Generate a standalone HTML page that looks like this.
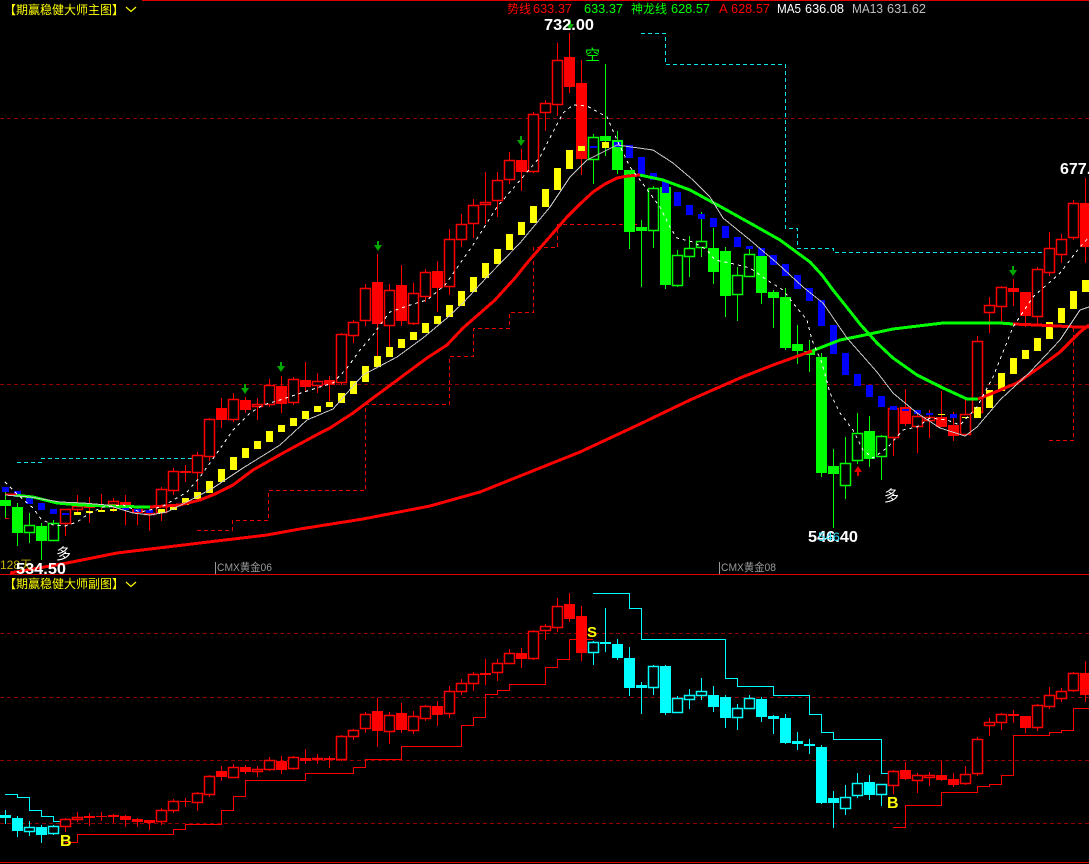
<!DOCTYPE html>
<html><head><meta charset="utf-8"><title>K线图</title>
<style>
html,body{margin:0;padding:0;background:#000;width:1089px;height:864px;overflow:hidden}
svg{display:block;position:absolute;left:0;top:0}
text{font-family:"Liberation Sans","Noto Sans CJK SC",sans-serif}
.g path,.g line,.l polyline{shape-rendering:crispEdges}
.g path.h{shape-rendering:auto;stroke-width:1.5}
</style></head><body>
<svg width="1089" height="864" viewBox="0 0 1089 864" xmlns="http://www.w3.org/2000/svg">
<rect width="1089" height="864" fill="#000"/>
<g class="g" fill="none" stroke-width="1">
<!-- frame -->
<path d="M142 .5H1089M0 574.5H1089M0 862.5H1089" stroke="#e00000"/>
<path d="M0 118.5H1089M0 384.5H1089M0 633.5H1089M0 697.5H1089M0 760.5H1089M0 823.5H1089" stroke="#900000" stroke-dasharray="4 3"/>
<path d="M215.5 562V574M719.5 562V574" stroke="#999"/>
<!-- stepped dashed main -->
<path d="M197 530.5H232.5V520.5H268.5V490.5H365.5V404.5H449.5V356.5H473.5V328.5H509.5V312.5H533.5V247.5H557.5V224.5H637M1049 440.5H1073.5V327M5 518.5H14" stroke="#f00000" stroke-dasharray="4 3"/>
<path d="M17 462.5H41.5V458.5H193M641 33.5H665.5V64.5H785.5V228.5H797.5V248.5H833.5V252.5H1045" stroke="#00e8e8" stroke-dasharray="4 3"/>
<!-- main wicks -->
<path stroke="#f00" d="M65.5 509V536M77.5 495V512M89.5 497V523M101.5 494V512M113.5 498V512M125.5 495V525M137.5 507V525M149.5 513V531M161.5 487V521M173.5 468V495M185.5 465V482M197.5 452V491M209.5 418V461M221.5 398V428M233.5 393V422M245.5 397V413M257.5 398V420M269.5 379V407M281.5 376V413M293.5 377V405M305.5 362V392M317.5 373V393M329.5 376V401M341.5 333V385M353.5 320V343M365.5 284V326M377.5 254V365M389.5 284V347M401.5 265V326M413.5 283V325M425.5 269V302M437.5 261V312M449.5 229V295M461.5 214V247M473.5 199V238M485.5 172V224M497.5 172V217M509.5 152V184M521.5 149V191M533.5 112V173M545.5 100V131M557.5 43V116M569.5 33V93M581.5 60V175M893.5 408V456M905.5 389V426M917.5 412V453M929.5 410V438M941.5 391V427M953.5 412V441M965.5 399V435M977.5 336V414M989.5 297V333M1001.5 286V321M1013.5 279V306M1025.5 292V327M1037.5 267V325M1049.5 232V276M1061.5 234V263M1073.5 200V240M1085.5 178V263"/>
<path stroke="#0f0" d="M5.5 492V518M17.5 503V546M29.5 513V543M41.5 523V560M53.5 520V541M593.5 134V184M605.5 64V156M617.5 131V174M629.5 170V249M641.5 220V287M653.5 186V248M665.5 180V289M677.5 250V287M689.5 236V277M701.5 212V257M713.5 228V284M725.5 247V317M737.5 267V321M749.5 249V277M761.5 248V304M773.5 290V328M785.5 288V350M797.5 325V364M809.5 340V372M821.5 353V477M833.5 449V528M845.5 437V499M857.5 413V464M869.5 416V467M881.5 435V480"/>
<!-- main hollow red -->
<path class="h" stroke="#f00" fill="#000" d="M60.5 509.5h10V523.5h-10zM72.5 506.5h10V509.5h-10zM108.5 501.5h10V504.5h-10zM144.5 513.5h10V514.5h-10zM156.5 489.5h10V512.5h-10zM168.5 471.5h10V490.5h-10zM192.5 455.5h10V472.5h-10zM204.5 419.5h10V456.5h-10zM228.5 399.5h10V419.5h-10zM252.5 404.5h10V406.5h-10zM264.5 385.5h10V404.5h-10zM288.5 379.5h10V402.5h-10zM312.5 381.5h10V385.5h-10zM336.5 334.5h10V382.5h-10zM348.5 322.5h10V335.5h-10zM360.5 288.5h10V320.5h-10zM384.5 290.5h10V325.5h-10zM408.5 293.5h10V323.5h-10zM420.5 272.5h10V296.5h-10zM444.5 239.5h10V286.5h-10zM456.5 224.5h10V239.5h-10zM468.5 205.5h10V223.5h-10zM480.5 202.5h10V204.5h-10zM492.5 180.5h10V200.5h-10zM504.5 160.5h10V179.5h-10zM528.5 114.5h10V171.5h-10zM540.5 103.5h10V112.5h-10zM552.5 60.5h10V104.5h-10zM888.5 408.5h10V437.5h-10zM912.5 416.5h10V426.5h-10zM924.5 417.5h10V420.5h-10zM960.5 414.5h10V434.5h-10zM972.5 341.5h10V412.5h-10zM984.5 305.5h10V312.5h-10zM996.5 287.5h10V306.5h-10zM1032.5 269.5h10V316.5h-10zM1044.5 248.5h10V272.5h-10zM1056.5 239.5h10V254.5h-10zM1068.5 203.5h10V237.5h-10z"/>
<!-- main hollow green -->
<path class="h" stroke="#0f0" fill="#000" d="M24.5 525.5h10V532.5h-10zM48.5 523.5h10V540.5h-10zM588.5 137.5h10V159.5h-10zM648.5 188.5h10V230.5h-10zM672.5 255.5h10V285.5h-10zM684.5 248.5h10V256.5h-10zM696.5 241.5h10V247.5h-10zM732.5 275.5h10V294.5h-10zM744.5 254.5h10V276.5h-10zM840.5 463.5h10V485.5h-10zM852.5 433.5h10V460.5h-10zM876.5 436.5h10V456.5h-10z"/>
<!-- main filled red -->
<path fill="#f00" d="M216 408h11V420h-11zM240 400h11V410h-11zM276 386h11V404h-11zM300 380h11V387h-11zM324 380h11V385h-11zM372 282h11V324h-11zM396 285h11V321h-11zM432 271h11V288h-11zM516 160h11V172h-11zM564 57h11V87h-11zM576 83h11V159h-11zM84 505h11V508h-11zM96 505h11V507h-11zM120 502h11V505h-11zM132 509h11V513h-11zM180 471h11V473h-11zM900 407h11V424h-11zM936 417h11V427h-11zM948 425h11V436h-11zM1008 288h11V292h-11zM1020 292h11V316h-11zM1080 203h11V247h-11z"/>
<!-- main filled green -->
<path fill="#0f0" d="M0 500h11V506h-11zM12 507h11V533h-11zM36 526h11V541h-11zM600 136h11V141h-11zM612 140h11V170h-11zM624 170h11V232h-11zM636 227h11V231h-11zM660 187h11V285h-11zM708 248h11V272h-11zM720 251h11V296h-11zM756 256h11V293h-11zM768 292h11V298h-11zM780 297h11V348h-11zM792 344h11V351h-11zM804 351h11V355h-11zM816 357h11V473h-11zM828 466h11V474h-11zM864 431h11V459h-11z"/>
<!-- blue -->
<path fill="#00f" d="M2 487h7V492h-7zM14 491h7V497h-7zM26 497h7V504h-7zM38 503h7V510h-7zM50 509h7V514h-7zM62 513h7V515h-7zM122 508h7V510h-7zM134 509h7V512h-7zM146 510h7V513h-7zM590 146h7V148h-7zM614 142h7V147h-7zM626 145h7V158h-7zM638 157h7V174h-7zM650 173h7V180h-7zM662 180h7V193h-7zM674 192h7V206h-7zM686 205h7V215h-7zM698 214h7V219h-7zM710 218h7V227h-7zM722 226h7V238h-7zM734 237h7V247h-7zM746 246h7V249h-7zM758 248h7V256h-7zM770 255h7V265h-7zM782 264h7V276h-7zM794 275h7V289h-7zM806 288h7V301h-7zM818 300h7V326h-7zM830 325h7V354h-7zM842 353h7V375h-7zM854 374h7V386h-7zM866 385h7V397h-7zM878 396h7V407h-7zM890 406h7V410h-7zM902 409h7V411h-7zM914 410h7V414h-7zM926 413h7V415h-7zM950 414h7V418h-7z"/>
<!-- yellow -->
<path fill="#ff0" d="M74 512h7V515h-7zM86 511h7V513h-7zM98 510h7V512h-7zM110 509h7V511h-7zM158 509h7V513h-7zM170 504h7V510h-7zM182 498h7V505h-7zM194 492h7V499h-7zM206 481h7V493h-7zM218 469h7V482h-7zM230 457h7V470h-7zM242 448h7V458h-7zM254 441h7V449h-7zM266 431h7V442h-7zM278 425h7V432h-7zM290 418h7V426h-7zM302 411h7V419h-7zM314 406h7V412h-7zM326 402h7V407h-7zM338 393h7V403h-7zM350 381h7V394h-7zM362 366h7V382h-7zM374 356h7V367h-7zM386 347h7V357h-7zM398 339h7V348h-7zM410 332h7V340h-7zM422 323h7V333h-7zM434 316h7V324h-7zM446 305h7V317h-7zM458 291h7V306h-7zM470 277h7V292h-7zM482 263h7V278h-7zM494 249h7V264h-7zM506 234h7V250h-7zM518 222h7V235h-7zM530 206h7V223h-7zM542 189h7V207h-7zM554 168h7V190h-7zM566 150h7V169h-7zM578 146h7V151h-7zM602 142h7V148h-7zM938 414h7V415h-7zM962 417h7V418h-7zM974 407h7V418h-7zM986 390h7V408h-7zM998 373h7V391h-7zM1010 358h7V374h-7zM1022 350h7V359h-7zM1034 338h7V351h-7zM1046 322h7V339h-7zM1058 308h7V323h-7zM1070 291h7V309h-7zM1082 280h7V292h-7z"/>
</g>
<g class="l" fill="none" stroke-linejoin="round">
<!-- wave -->
<polyline stroke="#0f0" stroke-width="3" points="13,495 33,497 57,503 80,505 107,506 143,507 150,507"/>
<polyline stroke="#f00" stroke-width="1.5" points="5,494 17,494"/>
<polyline stroke="#f00" stroke-width="3" points="150,507 180,505 200,500 215,494 233,485 253,470 283,453 320,433 330,428 353,413 373,398 400,378 427,358 447,345 463,328 487,307 495,300 515,278 527,263 547,240 567,217 580,204 593,192 605,184 617,178 628,176 640,175"/>
<polyline stroke="#0f0" stroke-width="3" points="640,175 663,180 690,190 723,208 757,227 780,240 810,262 822,275 833,290 845,305 860,324 877,343 893,358 917,375 943,388 967,399 978,399"/>
<polyline stroke="#f00" stroke-width="3" points="978,399 993,393 1017,383 1040,367 1060,352 1080,332 1089,325"/>
<!-- long MA -->
<polyline stroke="#f00" stroke-width="3" points="10,573 67,563 117,553 200,543 267,535 300,529 363,519 430,506 480,492 530,472 580,452 640,424 690,400 740,378 773,365 812,351"/>
<polyline stroke="#0f0" stroke-width="3" points="812,351 840,340 860,336 893,329 943,323 1000,323 1013,324"/>
<polyline stroke="#f00" stroke-width="3" points="1013,324 1037,325 1077,327 1089,327"/>
<!-- MA13 gray -->
<polyline stroke="#c8c8c8" stroke-width="1" points="5,495 30,497 60,502 83,503 107,505 133,513 150,515 167,512 187,502 213,488 243,468 280,445 307,420 333,409 347,393 363,375 397,357 423,338 447,318 463,303 487,277 520,243 550,207 570,177 587,160 617,145 653,150 673,163 693,180 710,197 723,218 750,240 777,263 803,287 823,303 847,338 877,372 893,393 917,413 940,428 965,436 977,427 1000,400 1030,372 1060,340 1080,310 1089,307"/>
<!-- MA5 white dotted -->
<polyline stroke="#fff" stroke-width="1" stroke-dasharray="3 4" points="5,482 17,494 33,508 41,519 53,525 65,526 77,522 90,513 103,507 123,505 140,512 150,510 163,506 187,492 200,477 217,453 233,430 250,413 263,405 280,400 307,391 333,383 347,368 360,350 373,335 380,325 390,312 410,305 427,300 445,285 473,245 497,207 510,192 540,157 553,132 563,113 573,105 587,106 607,117 617,140 630,167 640,180 660,207 670,227 677,238 693,242 707,250 715,260 730,263 750,268 767,280 783,290 793,303 807,320 812,340 822,363 830,393 840,413 853,430 863,450 873,458 888,447 903,430 917,427 930,418 947,420 960,425 977,407 993,377 1013,327 1033,297 1060,273 1080,247 1089,237"/>
</g>
<!-- arrows -->
<path fill="#00a800" d="M244 384h2v4h3l-4 6-4-6h3zM280 362h2v4h3l-4 6-4-6h3zM377 241h2v4h3l-4 6-4-6h3zM520 136h2v4h3l-4 6-4-6h3zM1012 266h2v4h3l-4 6-4-6h3zM569 20h2v4h3l-4 6-4-6h3z"/>
<path fill="#e00000" d="M857 476h2v-4h3l-4-6-4 6h3z"/>
<!-- sub panel -->
<g class="g" fill="none">
<path stroke="#f00" d="M65.5 818V832M77.5 812V822M89.5 813V826M101.5 812V821M113.5 814V823M125.5 815V827M137.5 818V827M149.5 820V830M161.5 808V825M173.5 799V813M185.5 798V807M197.5 792V811M209.5 775V797M221.5 766V781M233.5 764V778M245.5 765V774M257.5 766V777M269.5 757V771M281.5 756V774M293.5 756V770M305.5 749V764M317.5 754V764M329.5 756V768M341.5 735V761M353.5 729V740M365.5 712V733M377.5 698V747M389.5 712V744M401.5 703V733M413.5 711V734M425.5 705V721M437.5 701V726M449.5 686V718M461.5 679V695M473.5 672V691M485.5 659V685M497.5 659V681M509.5 649V664M521.5 648V668M533.5 630V660M545.5 624V640M557.5 598V632M569.5 593V622M581.5 606V661M893.5 770V794M905.5 762V780M917.5 773V793M929.5 772V786M941.5 761V781M953.5 773V787M965.5 766V785M977.5 737V776M989.5 718V736M1001.5 713V730M1013.5 710V723M1025.5 716V733M1037.5 704V731M1049.5 687V709M1061.5 688V702M1073.5 672V692M1085.5 661V702"/>
<path stroke="#0ff" d="M5.5 810V824M17.5 816V837M29.5 821V836M41.5 825V843M53.5 825V835M593.5 641V665M605.5 608V652M617.5 639V660M629.5 647V696M641.5 682V714M653.5 665V695M665.5 665V715M677.5 696V713M689.5 689V709M701.5 678V700M713.5 686V712M725.5 695V728M737.5 704V730M749.5 695V709M761.5 697V722M773.5 715V734M785.5 714V744M797.5 732V750M809.5 739V754M821.5 745V804M833.5 791V828M845.5 785V815M857.5 773V798M869.5 775V800M881.5 784V806"/>
<!-- steps -->
<path stroke="#f00" d="M65 842.5H77.5V834.5H173.5V829.5H185.5V824.5H221.5V810.5H233.5V796.5H245.5V780.5H305.5V773.5H353.5V767.5H365.5V759.5H401.5V746.5H461.5V725.5H473.5V717.5H485.5V694.5H497.5V690.5H509.5V684.5H545.5V667.5H557.5V659.5H569.5V639.5H593M893 827.5H905.5V805.5H941.5V792.5H977.5V786.5H989.5V784.5H1001.5V775.5H1013.5V735.5H1049.5V732.5H1061.5V730.5H1073.5V708.5H1089"/>
<path stroke="#0ff" d="M5 794.5H17.5V797.5H29.5V810.5H41.5V816.5H53.5V821.5H65M593 593.5H629.5V608.5H641.5V639.5H725.5V678.5H737.5V686.5H773.5V695.5H809.5V714.5H821.5V732.5H833.5V739.5H881.5V773.5H893"/>
<path class="h" stroke="#f00" fill="#000" d="M60.5 819.5h10V826.5h-10zM72.5 817.5h10V819.5h-10zM156.5 810.5h10V821.5h-10zM168.5 801.5h10V810.5h-10zM192.5 793.5h10V802.5h-10zM204.5 776.5h10V794.5h-10zM228.5 767.5h10V777.5h-10zM252.5 769.5h10V771.5h-10zM264.5 760.5h10V769.5h-10zM288.5 757.5h10V768.5h-10zM312.5 758.5h10V759.5h-10zM336.5 736.5h10V759.5h-10zM348.5 730.5h10V736.5h-10zM360.5 714.5h10V728.5h-10zM384.5 715.5h10V731.5h-10zM408.5 716.5h10V730.5h-10zM420.5 706.5h10V718.5h-10zM444.5 691.5h10V713.5h-10zM456.5 683.5h10V691.5h-10zM468.5 674.5h10V683.5h-10zM492.5 663.5h10V672.5h-10zM504.5 653.5h10V663.5h-10zM528.5 631.5h10V658.5h-10zM540.5 626.5h10V630.5h-10zM552.5 606.5h10V627.5h-10zM888.5 771.5h10V785.5h-10zM912.5 775.5h10V780.5h-10zM924.5 775.5h10V777.5h-10zM960.5 774.5h10V783.5h-10zM972.5 739.5h10V773.5h-10zM984.5 722.5h10V725.5h-10zM996.5 714.5h10V722.5h-10zM1032.5 705.5h10V727.5h-10zM1044.5 695.5h10V706.5h-10zM1056.5 691.5h10V698.5h-10zM1068.5 673.5h10V690.5h-10z"/>
<path class="h" stroke="#0ff" fill="#000" d="M24.5 827.5h10V831.5h-10zM48.5 826.5h10V833.5h-10zM588.5 642.5h10V652.5h-10zM648.5 666.5h10V687.5h-10zM672.5 698.5h10V712.5h-10zM684.5 695.5h10V699.5h-10zM696.5 691.5h10V695.5h-10zM732.5 708.5h10V717.5h-10zM744.5 698.5h10V708.5h-10zM840.5 797.5h10V808.5h-10zM852.5 783.5h10V795.5h-10zM876.5 784.5h10V794.5h-10z"/>
<path fill="#f00" d="M84 816h11V818h-11zM96 816h11V817h-11zM108 815h11V817h-11zM120 816h11V820h-11zM132 819h11V822h-11zM144 820h11V823h-11zM180 801h11V802h-11zM216 771h11V777h-11zM240 767h11V772h-11zM276 761h11V770h-11zM300 758h11V761h-11zM324 758h11V760h-11zM372 711h11V731h-11zM396 713h11V730h-11zM432 706h11V715h-11zM480 673h11V675h-11zM516 653h11V659h-11zM564 604h11V619h-11zM576 616h11V653h-11zM900 770h11V779h-11zM936 775h11V780h-11zM948 779h11V785h-11zM1008 714h11V716h-11zM1020 716h11V728h-11zM1080 673h11V695h-11z"/>
<path fill="#0ff" d="M0 815h11V818h-11zM12 818h11V831h-11zM36 827h11V835h-11zM600 642h11V644h-11zM612 644h11V658h-11zM624 658h11V688h-11zM636 685h11V688h-11zM660 666h11V713h-11zM708 695h11V707h-11zM720 697h11V718h-11zM756 699h11V717h-11zM768 716h11V719h-11zM780 718h11V743h-11zM792 741h11V744h-11zM804 744h11V746h-11zM816 747h11V803h-11zM828 798h11V803h-11zM864 782h11V795h-11z"/>
</g>
<!-- text -->
<text x="4" y="14" font-size="12" fill="#ffff00" textLength="120" lengthAdjust="spacingAndGlyphs">【期赢稳健大师主图】</text>
<path d="M126 7l5 4.5 5-4.5" fill="none" stroke="#ff0" stroke-width="1.2"/>
<text x="4" y="588" font-size="12" fill="#ffff00" textLength="120" lengthAdjust="spacingAndGlyphs">【期赢稳健大师副图】</text>
<path d="M126 582l5 4.5 5-4.5" fill="none" stroke="#ff0" stroke-width="1.2"/>
<g font-size="13">
<text x="507" y="13" fill="#f00" font-size="12">势线</text>
<text x="533" y="13" fill="#f00" textLength="39" lengthAdjust="spacingAndGlyphs">633.37</text>
<text x="584" y="13" fill="#0f0" textLength="39" lengthAdjust="spacingAndGlyphs">633.37</text>
<text x="631" y="13" fill="#0f0" font-size="12">神龙线</text>
<text x="671" y="13" fill="#0f0" textLength="39" lengthAdjust="spacingAndGlyphs">628.57</text>
<text x="719" y="13" fill="#f00">A</text>
<text x="731" y="13" fill="#f00" textLength="39" lengthAdjust="spacingAndGlyphs">628.57</text>
<text x="777" y="13" fill="#fff" textLength="24" lengthAdjust="spacingAndGlyphs">MA5</text>
<text x="805" y="13" fill="#fff" textLength="39" lengthAdjust="spacingAndGlyphs">636.08</text>
<text x="852" y="13" fill="#c0c0c0" textLength="31" lengthAdjust="spacingAndGlyphs">MA13</text>
<text x="887" y="13" fill="#c0c0c0" textLength="39" lengthAdjust="spacingAndGlyphs">631.62</text>
</g>
<g font-size="16" font-weight="700" fill="#fff">
<text x="544" y="30" textLength="50" lengthAdjust="spacingAndGlyphs">732.00</text>
<text x="808" y="542" textLength="50" lengthAdjust="spacingAndGlyphs">546.40</text>
<text x="1060" y="174">677.00</text>
</g>
<text x="818" y="541" font-size="12" fill="#33e0ff" textLength="22" lengthAdjust="spacingAndGlyphs">546</text>
<text x="0" y="569" font-size="12" fill="#c8b400">128天</text>
<text x="16" y="574" font-size="16" font-weight="700" fill="#fff" textLength="50" lengthAdjust="spacingAndGlyphs">534.50</text>
<text x="217" y="571" font-size="11" fill="#999" textLength="55" lengthAdjust="spacingAndGlyphs">CMX黄金06</text>
<text x="721" y="571" font-size="11" fill="#999" textLength="55" lengthAdjust="spacingAndGlyphs">CMX黄金08</text>
<text x="56" y="559" font-size="15" fill="#fff">多</text>
<text x="884" y="501" font-size="15" fill="#fff">多</text>
<text x="585" y="60" font-size="15" fill="#0f0">空</text>
<text x="587" y="637" font-size="15" font-weight="700" fill="#ff0">S</text>
<text x="60" y="846" font-size="16" font-weight="700" fill="#ff0">B</text>
<text x="887" y="808" font-size="16" font-weight="700" fill="#ff0">B</text>
</svg>
</body></html>
